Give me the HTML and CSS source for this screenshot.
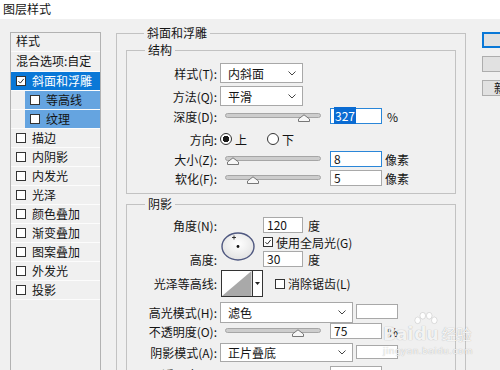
FILE: index.html
```html
<!DOCTYPE html>
<html lang="zh-CN">

<head>
    <meta charset="UTF-8">
    <title>图层样式</title>
    <link rel="stylesheet" href="styles.css">
</head>

<body>
    <div class="titlebar">图层样式</div>
    <div class="dialog">
        <ul class="style-list">
            <li class="list-head">样式</li>
            <li class="list-blend">混合选项:自定</li>
            <li class="item selected"><span class="box"><svg viewBox="0 0 10 10"><path d="M1.8 5.2 4.2 7.6 8.4 2.4"/></svg></span>斜面和浮雕</li>
            <li class="item sub"><div class="sub-inner"><span class="box"></span>等高线</div></li>
            <li class="item sub"><div class="sub-inner"><span class="box"></span>纹理</div></li>
            <li class="item"><span class="box"></span>描边</li>
            <li class="item"><span class="box"></span>内阴影</li>
            <li class="item"><span class="box"></span>内发光</li>
            <li class="item"><span class="box"></span>光泽</li>
            <li class="item"><span class="box"></span>颜色叠加</li>
            <li class="item"><span class="box"></span>渐变叠加</li>
            <li class="item"><span class="box"></span>图案叠加</li>
            <li class="item"><span class="box"></span>外发光</li>
            <li class="item"><span class="box"></span>投影</li>
        </ul>

        <fieldset class="group outer">
            <legend>斜面和浮雕</legend>

            <fieldset class="group structure">
                <legend>结构</legend>
                <div class="row h20">
                    <span class="lbl">样式(T):</span>
                    <div class="select w83"><span>内斜面</span><svg class="chev" viewBox="0 0 8 5"><path d="M0.5 0.5 4 4 7.5 0.5"/></svg></div>
                </div>
                <div class="row h20 mt3">
                    <span class="lbl">方法(Q):</span>
                    <div class="select w83"><span>平滑</span><svg class="chev" viewBox="0 0 8 5"><path d="M0.5 0.5 4 4 7.5 0.5"/></svg></div>
                </div>
                <div class="row mt2">
                    <span class="lbl">深度(D):</span>
                    <div class="slider"><div class="track"></div><svg class="thumb" style="left: 73px" viewBox="0 0 12 8"><path d="M0.5 7.5 0.5 5 6 0.8 11.5 5 11.5 7.5Z"/></svg></div>
                    <div class="num focus"><span class="sel">327</span></div>
                    <span class="unit">%</span>
                </div>
                <div class="row mt7">
                    <span class="lbl">方向:</span>
                    <span class="radio on"></span><span class="radio-text">上</span>
                    <span class="radio second"></span><span class="radio-text">下</span>
                </div>
                <div class="row mt4">
                    <span class="lbl">大小(Z):</span>
                    <div class="slider"><div class="track"></div><svg class="thumb" style="left: 2px" viewBox="0 0 12 8"><path d="M0.5 7.5 0.5 5 6 0.8 11.5 5 11.5 7.5Z"/></svg></div>
                    <div class="num active">8</div>
                    <span class="unit px">像素</span>
                </div>
                <div class="row mt3">
                    <span class="lbl">软化(F):</span>
                    <div class="slider"><div class="track"></div><svg class="thumb" style="left: 22px" viewBox="0 0 12 8"><path d="M0.5 7.5 0.5 5 6 0.8 11.5 5 11.5 7.5Z"/></svg></div>
                    <div class="num">5</div>
                    <span class="unit px">像素</span>
                </div>
            </fieldset>

            <fieldset class="group shadow">
                <legend>阴影</legend>
                <div class="angle-grid">
                    <span class="lbl">角度(N):</span>
                    <svg class="dial" viewBox="0 0 34 29">
                        <defs>
                            <radialGradient id="dialFill" cx="50%" cy="40%" r="60%">
                                <stop offset="0" stop-color="#ffffff"/>
                                <stop offset="1" stop-color="#e2e2e2"/>
                            </radialGradient>
                        </defs>
                        <ellipse cx="17" cy="14.5" rx="16" ry="13.5" fill="url(#dialFill)" stroke="#4f5880" stroke-width="1.4"/>
                        <path d="M13 3.5v4M11 5.5h4" stroke="#222" stroke-width="0.9"/>
                        <circle cx="17" cy="14.5" r="1.4" fill="#111"/>
                    </svg>
                    <div class="cell"><div class="num w40">120</div><span class="unit">度</span></div>
                    <div class="cell glob"><span class="box"><svg viewBox="0 0 10 10"><path d="M1.8 5.2 4.2 7.6 8.4 2.4"/></svg></span>使用全局光(G)</div>
                    <span class="lbl r3">高度:</span>
                    <div class="cell r3"><div class="num w40">30</div><span class="unit">度</span></div>
                </div>
                <div class="row h27 mt3">
                    <span class="lbl">光泽等高线:</span>
                    <svg class="contour" viewBox="0 0 42 27">
                        <rect x="0.5" y="0.5" width="41" height="26" fill="#fff" stroke="#333"/>
                        <path d="M1 26 30.5 1 30.5 26Z" fill="#a9a9a9"/>
                        <path d="M31.5 1v25" stroke="#333"/>
                        <path d="M34 12h5l-2.5 3Z" fill="#222"/>
                    </svg>
                    <span class="box aa"></span><span>消除锯齿(L)</span>
                </div>
                <div class="row h21 mt5">
                    <span class="lbl">高光模式(H):</span>
                    <div class="select w133"><span>滤色</span><svg class="chev" viewBox="0 0 8 5"><path d="M0.5 0.5 4 4 7.5 0.5"/></svg></div>
                    <div class="swatch"></div>
                </div>
                <div class="row">
                    <span class="lbl">不透明度(O):</span>
                    <div class="slider"><div class="track"></div><svg class="thumb" style="left: 67px" viewBox="0 0 12 8"><path d="M0.5 7.5 0.5 5 6 0.8 11.5 5 11.5 7.5Z"/></svg></div>
                    <div class="num">75</div>
                    <span class="unit">%</span>
                </div>
                <div class="row h19 mt4">
                    <span class="lbl">阴影模式(A):</span>
                    <div class="select w133"><span>正片叠底</span><svg class="chev" viewBox="0 0 8 5"><path d="M0.5 0.5 4 4 7.5 0.5"/></svg></div>
                    <div class="swatch low"></div>
                </div>
                <div class="row mt4">
                    <span class="lbl">不透明度(C):</span>
                    <div class="slider"><div class="track"></div><svg class="thumb" style="left: 67px" viewBox="0 0 12 8"><path d="M0.5 7.5 0.5 5 6 0.8 11.5 5 11.5 7.5Z"/></svg></div>
                    <div class="num">75</div>
                    <span class="unit">%</span>
                </div>
            </fieldset>
        </fieldset>

        <div class="buttons">
            <button class="btn default">确定</button>
            <button class="btn">取消</button>
            <button class="btn new">新建样式(W)...</button>
        </div>
    </div>

    <div class="watermark">
        <div class="wm-logo">
            <span class="wm-bai">Bai</span>
            <span class="wm-du">
                <svg class="wm-paw" viewBox="0 0 26 14">
                    <ellipse cx="4" cy="9" rx="3" ry="3.6"/>
                    <ellipse cx="9.5" cy="4" rx="3" ry="3.6"/>
                    <ellipse cx="16.5" cy="4" rx="3" ry="3.6"/>
                    <ellipse cx="22" cy="9" rx="3" ry="3.6"/>
                </svg>
                <span>du</span>
            </span>
            <span class="wm-jy">经验</span>
        </div>
        <div class="wm-url">jingyan.baidu.com</div>
    </div>
</body>

</html>
```

FILE: styles.css
```css
* {
    box-sizing: border-box;
}

body {
    margin: 0;
    width: 500px;
    height: 370px;
    overflow: hidden;
    position: relative;
    background-color: #f0f0f0;
    font-family: "Noto Sans CJK SC", "Microsoft YaHei", sans-serif;
    font-size: 12px;
    color: #141414;
}

.titlebar {
    height: 19px;
    padding-left: 3px;
    line-height: 17px;
    background-color: #fff;
}

.dialog {
    display: flex;
    align-items: flex-start;
    padding-left: 10px;
}

/* left list */

.style-list {
    flex: none;
    width: 91px;
    height: 350px;
    margin: 13px 0 0;
    padding: 0;
    list-style: none;
    border: 1px solid #b2b2b2;
    background-color: #f0f0f0;
}

.style-list li {
    height: 19px;
    line-height: 18px;
    white-space: nowrap;
    border-bottom: 1px solid #fcfcfc;
}

.list-head {
    padding-left: 5px;
    line-height: 15px !important;
}

.list-blend {
    height: 20px !important;
    padding-left: 5px;
    line-height: 18px !important;
}

.item {
    display: flex;
    align-items: center;
    padding-left: 5px;
}

.item.selected {
    background-color: #0a78d7;
    color: #fff;
}

.item.sub {
    padding-left: 14px;
    align-items: stretch;
}

.sub-inner {
    flex: 1;
    display: flex;
    align-items: center;
    padding-left: 5px;
    background-color: #65a4e0;
}

.box {
    flex: none;
    display: inline-block;
    width: 10px;
    height: 10px;
    margin-right: 6px;
    border: 1px solid #333;
    background-color: #fff;
}

.box svg {
    display: block;
    width: 8px;
    height: 8px;
    fill: none;
    stroke: #222;
    stroke-width: 1.2;
}

/* group boxes */

.group {
    min-width: 0;
    margin: 0;
    padding: 0;
    border: 1px solid #c2c2c2;
}

.group legend {
    margin-left: 18px;
    padding: 0 3px;
    line-height: 16px;
}

.outer {
    flex: none;
    width: 350px;
    height: 400px;
    margin: 6px 0 0 15px;
    padding: 1px 9px 0;
}

.structure {
    padding: 5px 0 7px;
}

.shadow {
    margin-top: 2px;
    padding: 5px 0 10px;
}

.row {
    display: flex;
    align-items: center;
    height: 16px;
    white-space: nowrap;
}

.h19 { height: 19px; }
.h20 { height: 20px; }
.h21 { height: 21px; }
.h27 { height: 27px; }
.mt2 { margin-top: 2px; }
.mt3 { margin-top: 3px; }
.mt4 { margin-top: 4px; }
.mt5 { margin-top: 5px; }
.mt7 { margin-top: 7px; }

.lbl {
    flex: none;
    width: 90px;
    text-align: right;
    white-space: nowrap;
}

.select {
    display: flex;
    align-items: center;
    justify-content: space-between;
    height: 100%;
    margin-left: 3px;
    padding: 0 6px 0 7px;
    border: 1px solid #a8a8a8;
    background-color: #fff;
}

.w83 { width: 83px; }
.w133 { width: 133px; }

.chev {
    width: 8px;
    height: 5px;
    fill: none;
    stroke: #444;
    stroke-width: 1;
}

.slider {
    flex: none;
    position: relative;
    width: 96px;
    height: 16px;
    margin-left: 8px;
}

.track {
    height: 5px;
    margin-top: 5px;
    border: 1px solid #a6a6a6;
    border-radius: 3px;
    background-color: #cdcdcd;
}

.thumb {
    position: absolute;
    top: 6px;
    width: 12px;
    height: 8px;
    fill: #f7f7f7;
    stroke: #777;
    stroke-width: 1;
}

.num {
    flex: none;
    width: 52px;
    height: 16px;
    margin-left: 9px;
    padding-left: 3px;
    line-height: 14px;
    border: 1px solid #a9a9a9;
    background-color: #fff;
}

.num.focus,
.num.active {
    border-color: #2a86d8;
}

.sel {
    padding: 0 1px;
    background-color: #0a6bd2;
    color: #fff;
}

.w40 {
    width: 40px;
    margin-left: 0;
}

.unit {
    margin-left: 5px;
}

.unit.px {
    margin-left: 3px;
}

.radio {
    flex: none;
    width: 12px;
    height: 12px;
    margin-left: 3px;
    border: 1px solid #333;
    border-radius: 50%;
    background-color: #fff;
}

.radio.on {
    background: radial-gradient(circle, #1a1a1a 0 3px, #fff 3.5px);
}

.radio.second {
    margin-left: 20px;
}

.radio-text {
    margin-left: 3px;
}

/* angle block */

.angle-grid {
    display: grid;
    grid-template-columns: 90px 46px auto;
    grid-template-rows: 16px 16px 16px;
    row-gap: 1px;
    align-items: center;
    white-space: nowrap;
}

.angle-grid .lbl {
    grid-column: 1;
    grid-row: 1;
}

.angle-grid .lbl.r3 {
    grid-row: 3;
}

.dial {
    grid-column: 2;
    grid-row: 1 / 4;
    width: 34px;
    height: 29px;
    margin-left: 4px;
    margin-top: 9px;
}

.cell {
    grid-column: 3;
    grid-row: 1;
    display: flex;
    align-items: center;
    height: 16px;
}

.cell.glob {
    grid-row: 2;
}

.cell.r3 {
    grid-row: 3;
}

.glob .box {
    margin-right: 3px;
}

.contour {
    flex: none;
    width: 42px;
    height: 27px;
    margin-left: 4px;
}

.box.aa {
    margin-left: 12px;
    margin-right: 3px;
}

.swatch {
    flex: none;
    width: 42px;
    height: 15px;
    margin-left: 3px;
    margin-top: -3px;
    border: 1px solid #a8a8a8;
    background-color: #fff;
}

.swatch.low {
    height: 14px;
    margin-top: -1px;
}

/* right buttons */

.buttons {
    flex: none;
    display: flex;
    flex-direction: column;
    gap: 8px;
    width: 100px;
    margin: 13px 0 0 16px;
}

.btn {
    height: 16px;
    padding: 0;
    font-family: inherit;
    font-size: 12px;
    line-height: 14px;
    color: #141414;
    border: 1px solid #adadad;
    background-color: #e1e1e1;
}

.btn.default {
    border: 2px solid #0a78d7;
}

.btn.new {
    text-align: left;
    padding-left: 11px;
}

/* watermark */

.watermark {
    position: absolute;
    left: 383px;
    top: 314px;
    color: rgba(255, 255, 255, 0.9);
    text-shadow: 0 0 1px rgba(0, 0, 0, 0.35);
    font-family: "DejaVu Sans", sans-serif;
    pointer-events: none;
}

.wm-logo {
    display: flex;
    align-items: flex-end;
    height: 29px;
}

.wm-bai,
.wm-du span {
    font-size: 17px;
    font-weight: bold;
    line-height: 18px;
}

.wm-du {
    display: flex;
    flex-direction: column;
    align-items: center;
    margin-left: 1px;
}

.wm-paw {
    width: 24px;
    height: 13px;
    fill: rgba(255, 255, 255, 0.9);
    stroke: rgba(0, 0, 0, 0.2);
    stroke-width: 0.6;
}

.wm-jy {
    margin-left: 3px;
    font-family: "Noto Sans CJK SC", sans-serif;
    font-size: 15px;
    line-height: 18px;
}

.wm-url {
    margin-top: 3px;
    font-size: 9px;
    letter-spacing: 0.4px;
}
```
